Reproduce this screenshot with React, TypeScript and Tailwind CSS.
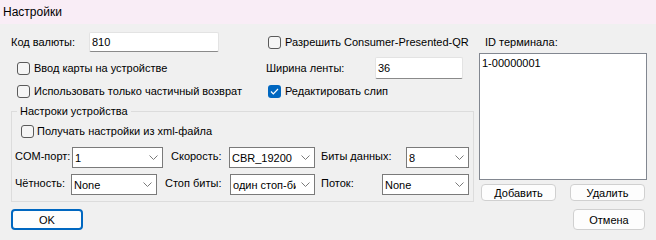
import React from "react";

function Checkbox({ checked = false }: { checked?: boolean }) {
  return checked ? (
    <span className="w-[13px] h-[13px] rounded-[3px] bg-[#0067c0] flex items-center justify-center shrink-0">
      <svg width="9" height="7" viewBox="0 0 9 7">
        <polyline points="1,3.5 3.3,5.8 8,1" fill="none" stroke="white" strokeWidth="1.2" />
      </svg>
    </span>
  ) : (
    <span className="w-[13px] h-[13px] rounded-[3px] border border-[#5a5a5a] bg-[#f5f5f5] shrink-0" />
  );
}

function Combo({ w, text }: { w: string; text: string }) {
  return (
    <div className={`${w} h-[21px] bg-white border border-[#7a7a7a] flex items-center pl-[2px] relative overflow-hidden shrink-0`}>
      <span className="whitespace-nowrap">{text}</span>
      <div className="absolute right-0 top-0 bottom-0 w-[18px] bg-white flex items-center justify-center">
        <svg width="9" height="5" viewBox="0 0 9 5">
          <polyline points="0.5,0.5 4.5,4.5 8.5,0.5" fill="none" stroke="#7a7a7a" strokeWidth="1" />
        </svg>
      </div>
    </div>
  );
}

function Btn({ w, h, children, primary = false }: { w: string; h: string; children: React.ReactNode; primary?: boolean }) {
  return (
    <div
      className={`${w} ${h} rounded-[4px] bg-[#fdfdfd] flex items-center justify-center ${
        primary ? "border-2 border-[#0067c0]" : "border border-[#d0d0d0]"
      }`}
    >
      {children}
    </div>
  );
}

export default function App() {
  return (
    <div className="w-[656px] h-[240px] bg-[#f0f0f0] font-['Liberation_Sans',Arial,sans-serif] text-[11px] leading-[14px] text-black overflow-hidden whitespace-nowrap">
      <div className="h-[24px] bg-[#f9edf6] pl-[3px] flex items-center text-[12px]">Настройки</div>

      <div className="flex pl-[11px] pt-[8px]">
        <div className="w-[462px] shrink-0 flex flex-col">
          <div className="flex">
            <div className="w-[255px] shrink-0 flex flex-col">
              <div className="h-[20px] flex items-center">
                <span className="w-[78px] shrink-0">Код валюты:</span>
                <div className="w-[130px] h-[20px] bg-white border border-[#e3e3e3] border-b-[#8a8a8a] rounded-[2px] flex items-center pl-[2px]">
                  810
                </div>
              </div>
              <div className="mt-[5px] h-[22px] flex items-center pl-[6px] gap-[4px]">
                <Checkbox />
                <span>Ввод карты на устройстве</span>
              </div>
              <div className="mt-[5px] h-[14px] flex items-center pl-[6px] gap-[4px]">
                <Checkbox />
                <span>Использовать только частичный возврат</span>
              </div>
            </div>
            <div className="flex flex-col">
              <div className="h-[20px] flex items-center pl-[2px] gap-[4px]">
                <Checkbox />
                <span>Разрешить Consumer-Presented-QR</span>
              </div>
              <div className="mt-[5px] h-[22px] flex items-center">
                <span className="w-[109px] shrink-0">Ширина ленты:</span>
                <div className="w-[88px] h-[22px] bg-white border border-[#e3e3e3] border-b-[#8a8a8a] rounded-[2px] flex items-center pl-[2px]">
                  36
                </div>
              </div>
              <div className="mt-[5px] h-[14px] flex items-center pl-[2px] gap-[4px]">
                <Checkbox checked />
                <span>Редактировать слип</span>
              </div>
            </div>
          </div>

          <fieldset className="mt-[6px] border border-[#dcdcdc] pl-[3px] pr-[4px] pb-[6px]">
            <legend className="ml-[2px] px-[3px] leading-[14px]">Настроки устройства</legend>
            <div className="mt-[6px] h-[14px] flex items-center pl-[6px] gap-[3px]">
              <Checkbox />
              <span>Получать настройки из xml-файла</span>
            </div>
            <div className="mt-[9px] h-[21px] flex items-start">
              <span className="w-[57px] shrink-0 pt-[2px]">COM-порт:</span>
              <Combo w="w-[91px]" text="1" />
              <span className="ml-[8px] w-[58px] shrink-0 pt-[2px]">Скорость:</span>
              <Combo w="w-[86px]" text="CBR_19200" />
              <span className="ml-[6px] w-[85px] shrink-0 pt-[2px]">Биты данных:</span>
              <Combo w="w-[63px]" text="8" />
            </div>
            <div className="mt-[6px] h-[21px] flex items-start">
              <span className="w-[56px] shrink-0 pt-[2px]">Чётность:</span>
              <Combo w="w-[86px]" text="None" />
              <span className="ml-[8px] w-[65px] shrink-0 pt-[2px]">Стоп биты:</span>
              <Combo w="w-[85px]" text="один стоп-бит" />
              <span className="ml-[6px] w-[61px] shrink-0 pt-[2px]">Поток:</span>
              <Combo w="w-[87px]" text="None" />
            </div>
          </fieldset>
        </div>

        <div className="ml-[6px] w-[168px] shrink-0 flex flex-col">
          <div className="h-[20px] flex items-center pl-[6px]">ID терминала:</div>
          <div className="mt-[1px] h-[127px] bg-white border border-[#828790] pl-[2px] pt-[2px]">1-00000001</div>
          <div className="mt-[4px] flex justify-between px-[2px]">
            <Btn w="w-[75px]" h="h-[17px]">Добавить</Btn>
            <Btn w="w-[75px]" h="h-[17px]">Удалить</Btn>
          </div>
        </div>
      </div>

      <div className="mt-[7px] flex justify-between px-[11px]">
        <Btn w="w-[72px]" h="h-[21px]" primary>
          OK
        </Btn>
        <Btn w="w-[72px]" h="h-[21px]">Отмена</Btn>
      </div>
    </div>
  );
}
